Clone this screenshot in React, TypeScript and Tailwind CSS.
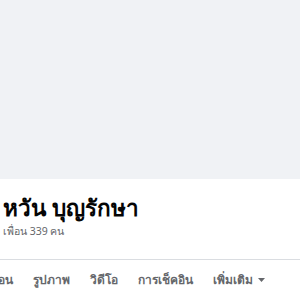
export default function App() {
  const tabs = ["เพื่อน", "รูปภาพ", "วิดีโอ", "การเช็คอิน"]
  return (
    <div className="w-[300px] h-[300px] overflow-hidden bg-white" style={{ fontFamily: "'Noto Sans', 'Liberation Sans', sans-serif" }}>
      {/* cover */}
      <div className="h-[179px] bg-[#f0f2f5]" />

      {/* name block */}
      <div className="pl-[3px] pt-[14px] h-[80px]">
        <h1 className="text-[22.5px] font-bold leading-[30px] text-[#050505]">หวัน บุญรักษา</h1>
        <p className="text-[10.5px] leading-[16px] text-[#65676b]">เพื่อน 339 คน</p>
      </div>

      {/* tabs */}
      <div className="border-t border-[#dadde1]">
        <div className="flex items-center gap-[20px] -ml-[14px] h-[40px] text-[12px] font-semibold text-[#65676b]">
          {tabs.map((t) => (
            <span key={t}>{t}</span>
          ))}
          <span className="flex items-center gap-[5px]">
            เพิ่มเติม
            <svg width="7" height="4" viewBox="0 0 7 4">
              <path d="M0 0h7L3.5 4z" fill="#65676b" />
            </svg>
          </span>
        </div>
      </div>
    </div>
  )
}
